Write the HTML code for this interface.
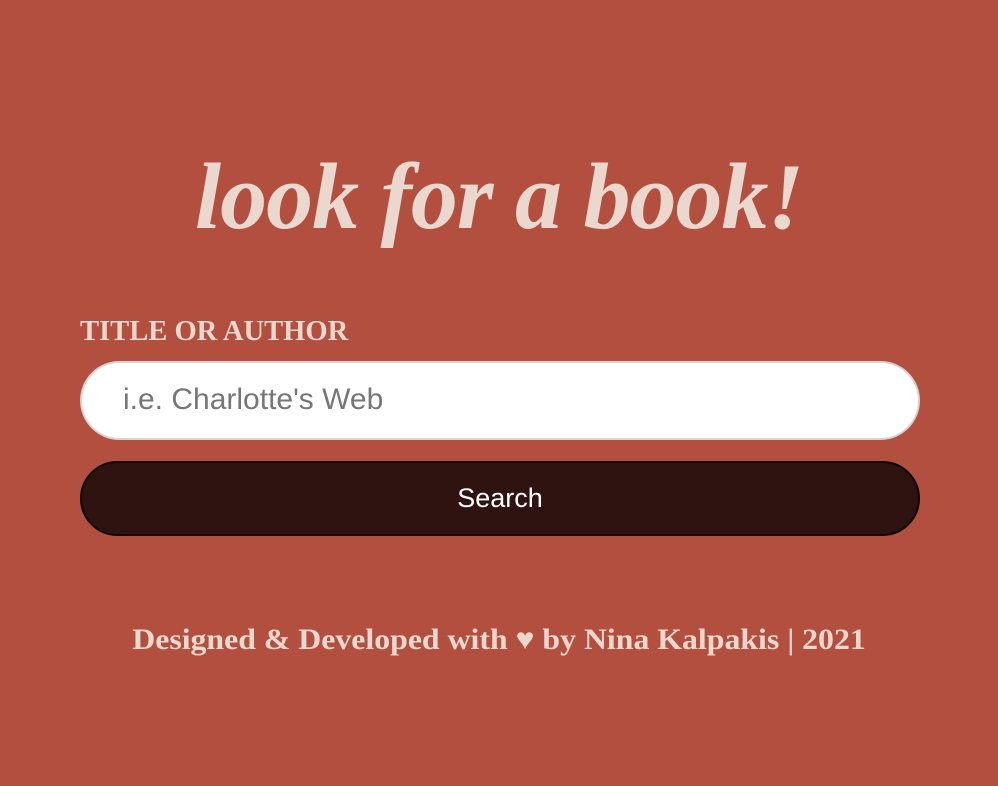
<!DOCTYPE html>
<html><head><meta charset="utf-8"><style>
html,body{margin:0;padding:0;}
body{width:998px;height:786px;background:#b34f3e;position:relative;overflow:hidden;font-family:"Liberation Serif",serif;color:#ead8cf;}
h1{position:absolute;left:0;right:0;top:142px;margin:0;text-align:center;font-style:italic;font-weight:bold;font-size:94px;line-height:110px;letter-spacing:-1px;transform:scaleX(1.0);}
.label{position:absolute;left:80px;top:314px;font-weight:bold;font-size:28px;line-height:36px;letter-spacing:0;transform:scaleX(1.02);transform-origin:left;}
.input{position:absolute;left:80px;top:361px;width:836px;height:75px;background:#fff;border:2px solid #d8d2d0;border-radius:40px;}
.input span{position:absolute;left:41px;top:19px;font-family:"Liberation Sans",sans-serif;font-size:30px;color:#767676;line-height:36px;}
.btn{position:absolute;left:80px;top:461px;width:836px;height:71px;background:#2e1310;border:2px solid #0c0504;border-radius:38px;text-align:center;font-family:"Liberation Sans",sans-serif;color:#fff;font-size:27px;line-height:71px;}
.foot{position:absolute;left:0;right:0;top:620px;text-align:center;font-weight:bold;font-size:30px;line-height:40px;letter-spacing:0;transform:scaleX(1.06);}
</style></head><body>
<h1>look for a book!</h1>
<div class="label">TITLE OR AUTHOR</div>
<div class="input"><span>i.e. Charlotte's Web</span></div>
<div class="btn">Search</div>
<div class="foot">Designed &amp; Developed with ♥ by Nina Kalpakis | 2021</div>
</body></html>
